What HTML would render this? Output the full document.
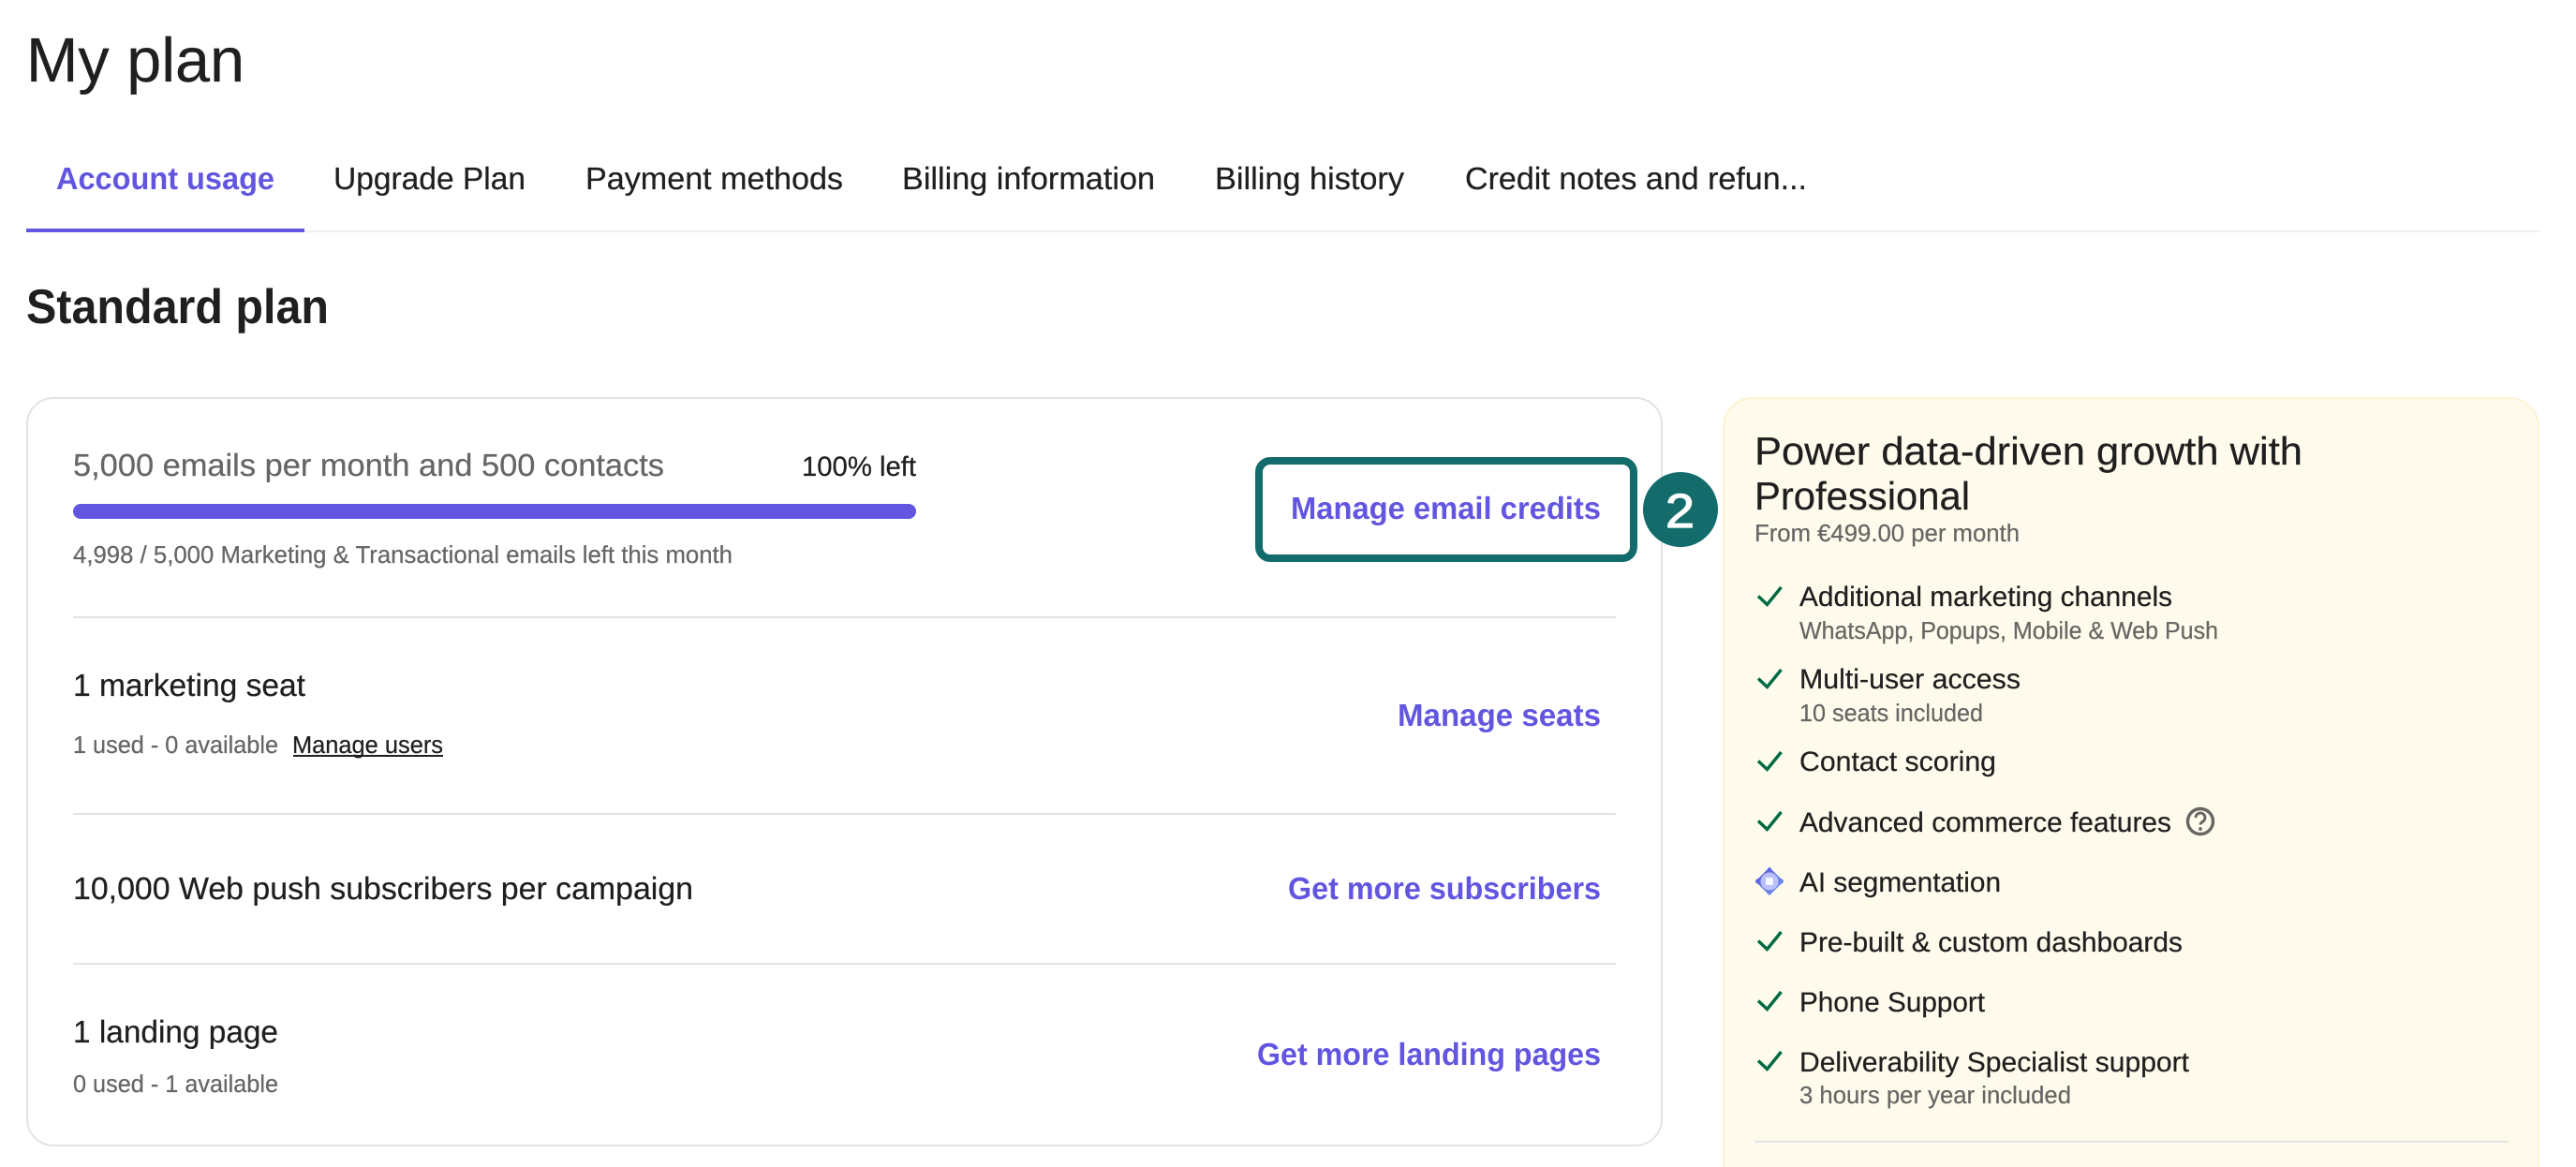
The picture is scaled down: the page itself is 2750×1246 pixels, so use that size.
<!DOCTYPE html>
<html lang="en"><head><meta charset="utf-8"><title>My plan</title>
<style>
html,body{margin:0;padding:0;background:#fff;width:2750px;height:1246px;overflow:hidden}
svg{display:block}
text{font-family:"Liberation Sans",sans-serif;fill:#1f1f1f;text-rendering:geometricPrecision;stroke:#1f1f1f;stroke-width:.25px}
.b{font-weight:700;stroke-width:0}
.v{fill:#6256e0;stroke:#6256e0}
.g{fill:#666664;stroke:#666664}
.s{font-size:26px}
.m{font-size:33.4px}
.r{font-size:29.6px}
</style></head><body>
<svg width="2750" height="1246" viewBox="0 0 2750 1246" xmlns="http://www.w3.org/2000/svg">
<defs><linearGradient id="dg" x1="0" y1="0" x2="1" y2="1"><stop offset="0" stop-color="#5b4fdc"/><stop offset="1" stop-color="#6f9bf0"/></linearGradient></defs>
<rect width="2750" height="1246" fill="#fff"/>
<text x="28" y="87" font-size="66.8" textLength="233" lengthAdjust="spacingAndGlyphs">My plan</text>

<rect x="28" y="246" width="2683" height="2" fill="#efefef"/>
<rect x="28" y="244" width="297" height="4" fill="#6256e0"/>
<text class="m b v" x="60" y="202" textLength="233" lengthAdjust="spacingAndGlyphs">Account usage</text>
<text class="m" x="356" y="202" textLength="205" lengthAdjust="spacingAndGlyphs">Upgrade Plan</text>
<text class="m" x="625" y="202" textLength="275" lengthAdjust="spacingAndGlyphs">Payment methods</text>
<text class="m" x="963" y="202" textLength="270" lengthAdjust="spacingAndGlyphs">Billing information</text>
<text class="m" x="1297" y="202" textLength="202" lengthAdjust="spacingAndGlyphs">Billing history</text>
<text class="m" x="1564" y="202" textLength="365" lengthAdjust="spacingAndGlyphs">Credit notes and refun...</text>

<text class="b" x="28" y="345" font-size="51.8" textLength="323" lengthAdjust="spacingAndGlyphs">Standard plan</text>

<rect x="29" y="425" width="1745" height="798" rx="28" fill="#fff" stroke="#e3e3e3" stroke-width="2"/>
<text class="m g" x="78" y="508" textLength="631" lengthAdjust="spacingAndGlyphs">5,000 emails per month and 500 contacts</text>
<text class="r" x="856" y="508" textLength="122" lengthAdjust="spacingAndGlyphs">100% left</text>
<rect x="78" y="538" width="900" height="16" rx="8" fill="#6256e0"/>
<text class="s g" x="78" y="601" textLength="704" lengthAdjust="spacingAndGlyphs">4,998 / 5,000 Marketing &amp; Transactional emails left this month</text>
<rect x="78" y="658" width="1647" height="2" fill="#e3e3e3"/>

<rect x="1344" y="492" width="400" height="104" rx="12" fill="#fff" stroke="#136c6b" stroke-width="8"/>
<text class="m b v" x="1378" y="554" textLength="331" lengthAdjust="spacingAndGlyphs">Manage email credits</text>

<text class="m" x="78" y="743" textLength="248" lengthAdjust="spacingAndGlyphs">1 marketing seat</text>
<text class="s g" x="78" y="804" textLength="219" lengthAdjust="spacingAndGlyphs">1 used - 0 available</text>
<text class="s" x="312" y="804" textLength="161" lengthAdjust="spacingAndGlyphs">Manage users</text>
<rect x="313" y="806" width="160" height="2" fill="#1f1f1f"/>
<text class="m b v" x="1492" y="775" textLength="217" lengthAdjust="spacingAndGlyphs">Manage seats</text>
<rect x="78" y="868" width="1647" height="2" fill="#e3e3e3"/>

<text class="m" x="78" y="960" textLength="662" lengthAdjust="spacingAndGlyphs">10,000 Web push subscribers per campaign</text>
<text class="m b v" x="1375" y="960" textLength="334" lengthAdjust="spacingAndGlyphs">Get more subscribers</text>
<rect x="78" y="1028" width="1647" height="2" fill="#e3e3e3"/>

<text class="m" x="78" y="1113" textLength="219" lengthAdjust="spacingAndGlyphs">1 landing page</text>
<text class="s g" x="78" y="1166" textLength="219" lengthAdjust="spacingAndGlyphs">0 used - 1 available</text>
<text class="m b v" x="1342" y="1137" textLength="367" lengthAdjust="spacingAndGlyphs">Get more landing pages</text>

<circle cx="1794" cy="544" r="40" fill="#136c6b"/>
<text x="1778" y="563" font-size="51" textLength="31" lengthAdjust="spacingAndGlyphs" style="fill:#fff;stroke:#fff;stroke-width:1.2px">2</text>

<path d="M1840 1260V456a31 31 0 0 1 31-31H2679a31 31 0 0 1 31 31V1260Z" fill="#fffbec" stroke="#fdf3d2" stroke-width="2"/>
<text x="1873" y="496" font-size="42" textLength="585" lengthAdjust="spacingAndGlyphs">Power data-driven growth with</text>
<text x="1873" y="544" font-size="42" textLength="230" lengthAdjust="spacingAndGlyphs">Professional</text>
<text class="s g" x="1873" y="578" textLength="283" lengthAdjust="spacingAndGlyphs">From €499.00 per month</text>

<g fill="none" stroke="#006a43" stroke-width="3.4">
<path d="M1877 636.5L1886.5 645.5L1901.5 627"/>
<path d="M1877 724.5L1886.5 733.5L1901.5 715"/>
<path d="M1877 812.5L1886.5 821.5L1901.5 803"/>
<path d="M1877 876.5L1886.5 885.5L1901.5 867"/>
<path d="M1877 1004.5L1886.5 1013.5L1901.5 995"/>
<path d="M1877 1068.5L1886.5 1077.5L1901.5 1059"/>
<path d="M1877 1132.5L1886.5 1141.5L1901.5 1123"/>
</g>

<text class="r" x="1921" y="647" textLength="398" lengthAdjust="spacingAndGlyphs">Additional marketing channels</text>
<text class="s g" x="1921" y="682" textLength="447" lengthAdjust="spacingAndGlyphs">WhatsApp, Popups, Mobile &amp; Web Push</text>
<text class="r" x="1921" y="735" textLength="236" lengthAdjust="spacingAndGlyphs">Multi-user access</text>
<text class="s g" x="1921" y="770" textLength="196" lengthAdjust="spacingAndGlyphs">10 seats included</text>
<text class="r" x="1921" y="823" textLength="210" lengthAdjust="spacingAndGlyphs">Contact scoring</text>
<text class="r" x="1921" y="888" textLength="397" lengthAdjust="spacingAndGlyphs">Advanced commerce features</text>
<circle cx="2349" cy="877" r="13.5" fill="none" stroke="#666664" stroke-width="3.4"/>
<path d="M2344 873a5 5 0 1 1 7.5 4.3c-1.6.9-2.5 1.7-2.5 3.2" fill="none" stroke="#666664" stroke-width="3"/>
<circle cx="2349" cy="885" r="1.9" fill="#666664"/>

<path d="M1889 926Q1890 926 1891 928Q1896 936 1903 939Q1905 941 1903 943Q1896 946 1891 954Q1889 957 1887 954Q1882 946 1875 943Q1873 941 1875 939Q1882 936 1887 928Q1888 926 1889 926Z" fill="url(#dg)"/>
<path d="M1889 925L1905 941L1889 957L1873 941Z" fill="url(#dg)" stroke="url(#dg)" stroke-width="0" transform="translate(1889 941) scale(.94) translate(-1889 -941)"/>
<circle cx="1889" cy="941" r="9.5" fill="#b9c0fb"/>
<rect x="1885" y="937" width="8" height="8" rx="2" fill="#f6f7ff"/>
<text class="r" x="1921" y="952" textLength="215" lengthAdjust="spacingAndGlyphs">AI segmentation</text>
<text class="r" x="1921" y="1016" textLength="409" lengthAdjust="spacingAndGlyphs">Pre-built &amp; custom dashboards</text>
<text class="r" x="1921" y="1080" textLength="198" lengthAdjust="spacingAndGlyphs">Phone Support</text>
<text class="r" x="1921" y="1144" textLength="416" lengthAdjust="spacingAndGlyphs">Deliverability Specialist support</text>
<text class="s g" x="1921" y="1178" textLength="290" lengthAdjust="spacingAndGlyphs">3 hours per year included</text>
<rect x="1873" y="1218" width="805" height="2" fill="#e3e3e3"/>
</svg>
</body></html>
